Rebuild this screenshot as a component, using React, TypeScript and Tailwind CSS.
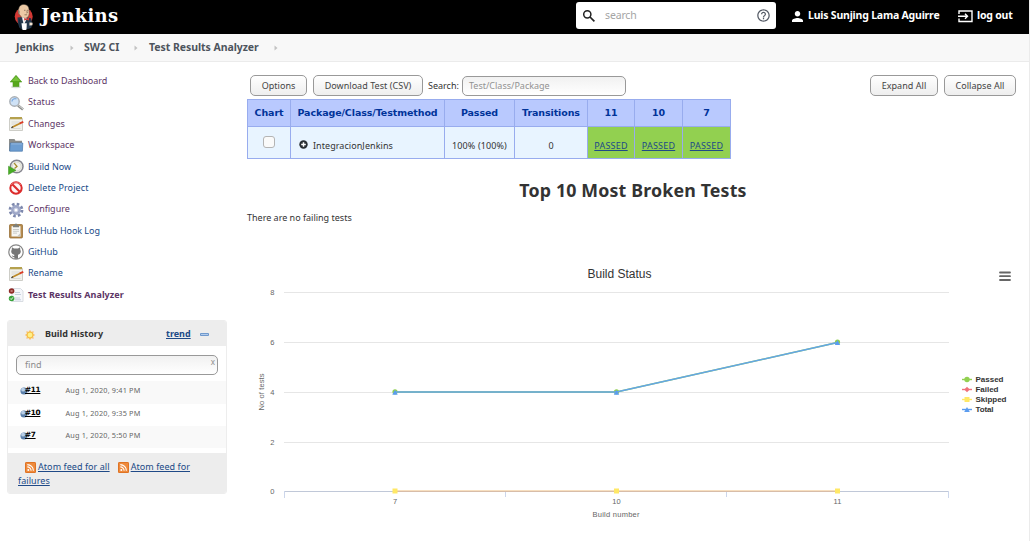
import type { ReactNode } from "react";

const sans = "font-['Noto_Sans','Open_Sans',sans-serif]";

function JenkinsLogo() {
  return (
    <svg className="mt-[3px] h-[27px] w-[20px] shrink-0" viewBox="0 0 20 27">
      <circle cx="9.7" cy="12.5" r="9" fill="#d33833" />
      <path d="M3.5 13.5 8 13l5 .5 4 .8 1.3 5.4-1 4-3 1.3-6 .7-3-2.2-1.5-5z" fill="#24384c" />
      <path d="M4.7 5C5 1.8 7.300.3 10 .4c3.400.2 5 2.200 5 5.300l.2 3.800c-.2 2.800-1.600 4.300-3.700 4.800L8 13.700 5.400 10.500C4.300 8.800 4.400 7 4.700 5z" fill="#ecc9a5" stroke="#4c443b" strokeWidth=".5" />
      <path d="M4.700 5c-.9 1.700-.7 3.800.3 5.400l.8-2.600z" fill="#8b8272" />
      <path d="M10 6.300h1.500M13 6.300h1.400M10.500 10.800h2.600M12.700 6.600l.7 2.200-1 .2" stroke="#5b4636" strokeWidth=".6" fill="none" />
      <path d="M8 13.300l1.800 7.700 3.100-6.500z" fill="#f5f5f5" />
      <path d="M10.200 13.900l2.400.8 2.400-.9v2.800l-2.400-.8-2.400.8z" fill="#d33833" />
      <path d="M7.500 19.200h5.300l-.3 6.300c-1 .8-3.200.8-4.200 0z" fill="#fff" />
      <path d="M15.500 18.500l3.100.3-.2 2.500-3 .3z" fill="#f3e1cf" />
      <path d="M5.400 15.500l1.200 8.800" stroke="#111d29" strokeWidth=".6" />
    </svg>
  );
}

function Crumb({ children, width }: { children: ReactNode; width: string }) {
  return (
    <div className={`flex shrink-0 items-center justify-between ${width}`}>
      <span>{children}</span>
      <svg className="h-[6px] w-[4px]" viewBox="0 0 4 6"><path d="M.5.5 3.500 3 .5 5.500z" fill="#c3c3c3" /></svg>
    </div>
  );
}

function UpIcon() {
  return (
    <svg viewBox="0 0 16 16">
      <ellipse cx="8" cy="14" rx="5" ry="1.200" fill="#d8dfd5" />
      <path d="M8 2.300 13.800 9H11v4.500H5V9H2.200z" fill="#57a81c" stroke="#4f9820" strokeWidth=".6" />
      <path d="M8 3.500 12 8H4z" fill="#77c33a" />
    </svg>
  );
}
function SearchIcon() {
  return (
    <svg viewBox="0 0 16 16">
      <path d="M10 10.500 15 14.500" stroke="#8d8f8c" strokeWidth="2.600" />
      <path d="M10.500 10.400 15 14" stroke="#e5e5e5" strokeWidth=".9" />
      <circle cx="6.500" cy="6.500" r="4.700" fill="#cfe2f6" stroke="#a9afb5" strokeWidth="1.400" />
      <path d="M4 6.500A3 3 0 0 1 8.500 4" stroke="#7cabe0" fill="none" strokeWidth="1.300" />
    </svg>
  );
}
function NotepadIcon() {
  return (
    <svg viewBox="0 0 16 16">
      <path d="M1.500 2.500h13v12h-13z" fill="#f1f1ec" stroke="#c1c1bb" strokeWidth=".8" />
      <path d="M2 1h12v2.300H2z" fill="#b5a14e" />
      <path d="M3.500 6h8M3.500 8h6M3.500 12.500h9" stroke="#d4d4ce" strokeWidth=".8" />
      <path d="M4.200 11.200 12.300 7.300" stroke="#bd8a27" strokeWidth="1.700" />
      <path d="M11.800 7.400 15.300 5.900" stroke="#db3c26" strokeWidth="1.700" />
      <path d="M3.300 11.800 5 10.900" stroke="#444" strokeWidth="1.200" />
    </svg>
  );
}
function FolderIcon() {
  return (
    <svg viewBox="0 0 16 16">
      <path d="M1 2h5.500l1 1.800H14V9H1z" fill="#8b8d8b" />
      <path d="M1 8h3v6H1z" fill="#8b8d8b" />
      <path d="M1.700 14.200 2.300 6H14.800L14.400 14.200z" fill="#6d9dd1" stroke="#4a79ac" strokeWidth=".7" />
      <path d="M3.200 6.900h10.700" stroke="#a4c5e8" strokeWidth=".8" />
    </svg>
  );
}
function BuildIcon() {
  return (
    <svg viewBox="0 0 16 16">
      <circle cx="8.700" cy="7.500" r="6.300" fill="#f2f2ec" stroke="#85858e" strokeWidth="1.500" />
      <circle cx="8.700" cy="7.500" r="4.500" fill="none" stroke="#d0d0c5" strokeWidth=".8" />
      <path d="M6.200 4.200 9 7.500l-2.500 2" stroke="#a48a29" strokeWidth="1.300" fill="none" />
      <path d="M.5 7.200 8 11.300.5 15.500z" fill="#48ad25" stroke="#3a901e" strokeWidth=".5" />
    </svg>
  );
}
function DeleteIcon() {
  return (
    <svg viewBox="0 0 16 16">
      <circle cx="8" cy="8" r="5.700" fill="#fff5f5" stroke="#dc2c2c" strokeWidth="2" />
      <path d="M4 4 12 12" stroke="#dc2c2c" strokeWidth="2.200" />
      <path d="M3.200 5A5.700 5.700 0 0 1 12.800 5" stroke="#ef7c7c" fill="none" strokeWidth=".8" />
    </svg>
  );
}
function GearIcon() {
  return (
    <svg viewBox="0 0 16 16">
      <circle cx="8" cy="8" r="5.800" fill="none" stroke="#7d88ad" strokeWidth="3.200" strokeDasharray="2.450 2.105" />
      <circle cx="8" cy="8" r="4.900" fill="#a3accb" />
      <circle cx="8" cy="8" r="3.100" fill="#bdc4dc" stroke="#8992b5" strokeWidth=".6" />
      <circle cx="8" cy="8" r="1.500" fill="#fff" />
    </svg>
  );
}
function ClipboardIcon() {
  return (
    <svg viewBox="0 0 16 16">
      <rect x="1.500" y="1.500" width="13" height="13.500" rx="1" fill="#b68a4c" stroke="#8f6629" strokeWidth=".7" />
      <path d="M3.500 3.200h9v10.300h-9z" fill="#f6f6f3" />
      <path d="M5 2.200h1.500L7 .7h2l.5 1.500H11v2H5z" fill="#7e807b" />
      <path d="M5 6.500h6M5 8.300h6M5 10.100h4" stroke="#bfc0bc" strokeWidth=".8" />
      <path d="M9 13.500 12.500 10v3.500z" fill="#c9c9c5" />
    </svg>
  );
}
function GitHubIcon() {
  return (
    <svg viewBox="0 0 16 16">
      <circle cx="8" cy="8" r="7.200" fill="#fff" stroke="#868686" strokeWidth="1.200" />
      <path d="M4 3.300l2 1.100h4l2-1.100.3 2.400c1.200 2.100.2 4.400-2.300 5v4H6.300v-1.600c-1.500.2-2.100-.6-2.600-1.500 1.100 0 1.300.7 2.500.6l.1-1.500C3.500 10.100 2.500 7.800 3.700 5.700z" fill="#777" />
    </svg>
  );
}
function AnalyzerIcon() {
  return (
    <svg viewBox="0 0 16 16">
      <path d="M4 1.500h8.500L15 4v10.500H4z" fill="#f5f7fb" stroke="#d1d5dc" strokeWidth=".8" />
      <path d="M7 5.500h5M7 7.500h6M7 11h5M7 12.800h6" stroke="#b9c4d5" strokeWidth=".8" />
      <circle cx="3.600" cy="4" r="2.800" fill="#8e2a27" />
      <path d="M2.800 3.200l1.600 1.600m0-1.600-1.600 1.600" stroke="#f2c9c9" strokeWidth=".7" />
      <circle cx="3.600" cy="11.500" r="2.800" fill="#37a33b" />
      <path d="M2.200 11.500l1 1 1.800-2.200" stroke="#fff" strokeWidth=".9" fill="none" />
    </svg>
  );
}

const tasks = [
  { label: "Back to Dashboard", icon: <UpIcon />, look: "text-[#5c3566] tracking-[-0.050px]" },
  { label: "Status", icon: <SearchIcon />, look: "text-[#5c3566] tracking-[0.100px]" },
  { label: "Changes", icon: <NotepadIcon />, look: "text-[#5c3566]" },
  { label: "Workspace", icon: <FolderIcon />, look: "text-[#5c3566]" },
  { label: "Build Now", icon: <BuildIcon />, look: "text-[#204a87]" },
  { label: "Delete Project", icon: <DeleteIcon />, look: "text-[#204a87] tracking-[0.100px]" },
  { label: "Configure", icon: <GearIcon />, look: "text-[#5c3566]" },
  { label: "GitHub Hook Log", icon: <ClipboardIcon />, look: "text-[#204a87] tracking-[-0.050px]" },
  { label: "GitHub", icon: <GitHubIcon />, look: "text-[#204a87]" },
  { label: "Rename", icon: <NotepadIcon />, look: "text-[#204a87]" },
  { label: "Test Results Analyzer", icon: <AnalyzerIcon />, look: "font-bold text-[#5c3566] tracking-[0.040px]" },
];

const builds = [
  { id: "#11", date: "Aug 1, 2020, 9:41 PM", row: "h-[23px] bg-[#f9f9f9]" },
  { id: "#10", date: "Aug 1, 2020, 9:35 PM", row: "h-[22px] bg-white" },
  { id: "#7", date: "Aug 1, 2020, 5:50 PM", row: "h-[22px] bg-[#f9f9f9]" },
];

function RssIcon() {
  return (
    <svg className="mr-[2px] inline h-[11px] w-[11px] align-[-3px]" viewBox="0 0 11 11">
      <rect width="11" height="11" rx="1.500" fill="#ee8a3c" />
      <rect x=".4" y=".4" width="10.200" height="10.200" rx="1.200" fill="none" stroke="#d9691c" strokeWidth=".8" />
      <circle cx="3.300" cy="7.900" r="1" fill="#fff" />
      <path d="M2.300 4.900a3.800 3.800 0 0 1 3.800 3.900M2.300 2.600a6.200 6.200 0 0 1 6.100 6.200" fill="none" stroke="#fff" strokeWidth="1.100" />
    </svg>
  );
}

function BuildHistory() {
  return (
    <section className="ml-[7px] mt-[15px] w-[220px] overflow-hidden rounded-[3px] border border-[#ededed] bg-white">
      <header className="flex h-[25px] items-center bg-[#ededed] pl-[16px] text-[9px] font-bold text-[#333]">
        <svg className="mt-[2px] h-[12px] w-[12px]" viewBox="0 0 12 12">
          <path d="M6 .8 7.200 2.800 9.700 2.300 9.200 4.800 11.200 6 9.200 7.200 9.700 9.700 7.200 9.200 6 11.200 4.800 9.200 2.300 9.700 2.800 7.200.8 6 2.800 4.800 2.300 2.300 4.800 2.800z" fill="#fbc06c" />
          <circle cx="6" cy="6" r="2.900" fill="#fff08a" stroke="#f0b634" strokeWidth=".8" />
        </svg>
        <span className="ml-[9px] w-[121px]">Build History</span>
        <a className="w-[34px] text-[#204a87] underline">trend</a>
        <svg className="mt-[2px] h-[3px] w-[9px]" viewBox="0 0 9 3"><rect x=".4" y=".4" width="8.200" height="2.200" rx=".6" fill="#b3ccec" stroke="#4a7fc0" strokeWidth=".8" /></svg>
      </header>
      <div className="flex h-[35px] items-start px-[8px] pt-[9px]">
        <div className="flex h-[20px] w-[202px] justify-between rounded-[5px] border border-[#999] bg-linear-to-b from-[#f1f1f1] to-white pl-[8px] pr-[2px] text-[9px] leading-[18px] text-[#8c8c8c]">
          <span>find</span>
          <span className="text-[8px] leading-[11px]">x</span>
        </div>
      </div>
      {builds.map((b) => (
        <div key={b.id} className={`flex items-center pb-[4px] pl-[12px] ${b.row}`}>
          <svg className="mt-px h-[8px] w-[8px]" viewBox="0 0 9 9">
            <circle cx="4.500" cy="4.500" r="4" fill="#5a7faa" />
            <circle cx="3.500" cy="3" r="2.200" fill="#b8cee7" />
          </svg>
          <a className="-ml-[3px] w-[40.500px] font-['DejaVu_Sans',sans-serif] text-[7.300px] font-bold tracking-[-0.300px] text-black underline decoration-1 underline-offset-1">{b.id}</a>
          <span className="text-[7.300px] tracking-[0.170px] text-[#666]">{b.date}</span>
        </div>
      ))}
      <footer className="mt-[5px] h-[40px] bg-[#ededed] pl-[10px] pt-[7px] text-[9px] leading-[14px] tracking-[0.060px] text-[#204a87]">
        <div className="pl-[7px]">
          <RssIcon /><a className="underline">Atom feed for all</a>
          <span className="inline-block w-[8px]" />
          <RssIcon /><a className="underline">Atom feed for</a>
        </div>
        <a className="block underline">failures</a>
      </footer>
    </section>
  );
}

function Button({ children, width }: { children: ReactNode; width: string }) {
  return (
    <button className={`h-[21px] shrink-0 whitespace-nowrap rounded-[5px] border border-[#999] bg-linear-to-b from-white to-[#eee] text-[9px] leading-[19px] tracking-[0.040px] text-[#444] ${width}`}>
      {children}
    </button>
  );
}

function ResultsTable() {
  return (
    <div className="grid w-[484px] grid-cols-[42px_153px_69px_72px_46px_47px_47px] grid-rows-[26px_31px] gap-px bg-[#98acee] p-px text-[9px] text-[#333]">
      {["Chart", "Package/Class/Testmethod", "Passed", "Transitions", "11", "10", "7"].map((h) => (
        <div key={h} className="flex items-center justify-center bg-[#b9c9fe] font-['DejaVu_Sans',sans-serif] text-[9.500px] font-bold tracking-[-0.100px] text-[#039]">{h}</div>
      ))}
      <div className="flex justify-center bg-[#e8f4ff] pt-[9px]">
        <span className="h-[12px] w-[12px] rounded-[3px] border border-[#b4b4b4] bg-[#fafafa]" />
      </div>
      <div className="flex items-center bg-[#e8f4ff] pl-[8px] pt-[6px]">
        <svg className="-mt-[3px] h-[9px] w-[9px]" viewBox="0 0 9 9"><circle cx="4.500" cy="4.500" r="4.200" fill="#272d32" /><path d="M4.500 2.200v4.600M2.200 4.500h4.600" stroke="#fff" strokeWidth="1.500" /></svg>
        <span className="ml-[5px] tracking-[0.060px]">IntegracionJenkins</span>
      </div>
      <div className="flex items-center justify-center whitespace-nowrap bg-[#e8f4ff] pt-[6px] tracking-[0.120px]">100% (100%)</div>
      <div className="flex items-center justify-center bg-[#e8f4ff] pt-[6px]">0</div>
      {[11, 10, 7].map((n) => (
        <div key={n} className="flex items-center justify-center bg-[#92d050] pt-[6px]"><a className="tracking-[0.200px] text-[#204a87] underline">PASSED</a></div>
      ))}
    </div>
  );
}

const seriesX = [148, 369.500, 590.500];

function Chart() {
  return (
    <svg className="mt-[31px] block h-[286px] w-[782px] font-['Liberation_Sans',sans-serif]" viewBox="0 0 782 286">
      <text x="372.500" y="23" textAnchor="middle" fontSize="12.300" fill="#333" textLength="64" lengthAdjust="spacingAndGlyphs">Build Status</text>
      {[37.500, 87.500, 137.500, 187.500].map((y) => <path key={y} d={`M37 ${y}H702`} stroke="#e6e6e6" />)}
      <path d="M37 236.500H702" stroke="#c0c8d8" />
      <path d="M37.500 236v7M258.500 236v6M479.500 236v6M701.500 236v7" stroke="#ccd6eb" fill="none" />
      <g fontSize="7.500" fill="#666">
        {["8", "6", "4", "2", "0"].map((n, i) => <text key={n} x="27.500" y={[40, 90, 140, 190, 239][i]} textAnchor="end">{n}</text>)}
        {["7", "10", "11"].map((n, i) => <text key={n} x={seriesX[i]} y="249" textAnchor="middle">{n}</text>)}
        <text x="369" y="262" textAnchor="middle" textLength="47">Build number</text>
        <text transform="translate(17 137) rotate(-90)" textAnchor="middle" textLength="37">No of tests</text>
      </g>
      <path d="M148 235.500H590.500" stroke="#f7dfc0" />
      <path d="M148 236.500H590.500" stroke="#d8bda8" />
      {seriesX.map((x) => <rect key={x} x={x - 2.500} y="233.500" width="5" height="5" fill="#ffe866" />)}
      <path d="M148 137 369.500 137 590.500 87.500" fill="none" stroke="#92d050" strokeWidth="1.500" />
      {seriesX.map((x, i) => <circle key={x} cx={x} cy={i === 2 ? 87 : 136.800} r="2.600" fill="#92d050" />)}
      <path d="M148 137 369.500 137 590.500 87.500" fill="none" stroke="#64a5e8" strokeWidth="1.500" />
      {seriesX.map((x, i) => {
        const y = i === 2 ? 87.500 : 137.300;
        return <path key={x} d={`M${x} ${y - 2.500}L${x + 2.700} ${y + 2.500}H${x - 2.700}z`} fill="#5b9cf0" />;
      })}
      <path d="M753 17.500h10M753 21.200h10M753 25h10" stroke="#666" strokeWidth="1.800" strokeLinecap="round" />
      <path d="M715 124.500h10" stroke="#92d050" strokeWidth="1.400" />
      <circle cx="720" cy="124.500" r="2.700" fill="#92d050" />
      <path d="M715 134.500h10" stroke="#f0717a" strokeWidth="1.400" />
      <path d="M720 131.700l2.700 2.800-2.700 2.700-2.700-2.700z" fill="#f0717a" />
      <path d="M715 144.500h10" stroke="#ffe866" strokeWidth="1.400" />
      <path d="M717.500 142h5v5h-5z" fill="#ffe866" />
      <path d="M715 154.500h10" stroke="#5b9cf0" strokeWidth="1.400" />
      <path d="M720 151.900l2.800 5.100h-5.600z" fill="#5b9cf0" />
      <g fontSize="8" fontWeight="700" fill="#333">
        <text x="728.500" y="127" textLength="28">Passed</text>
        <text x="728.500" y="137" textLength="23">Failed</text>
        <text x="728.500" y="147" textLength="31">Skipped</text>
        <text x="728.500" y="157" textLength="18">Total</text>
      </g>
    </svg>
  );
}

export default function App() {
  return (
    <div className={`h-[541px] w-[1030px] overflow-hidden border-r border-[#ebebeb] bg-white text-[9px] text-[#333] ${sans}`}>
      <header className="flex h-[34px] items-center bg-black text-[11px] font-bold text-white">
        <div className="-mt-[3px] flex w-[576px] items-center pl-[14px]">
          <JenkinsLogo />
          <span className="ml-[7px] font-['DejaVu_Serif',serif] text-[18px] leading-[26px] tracking-[0.250px]">Jenkins</span>
        </div>
        <div className="-mt-[3px] flex h-[27px] w-[200px] items-center rounded-[3px] bg-white pl-[6px] pr-[5px] font-normal">
          <svg className="h-[14px] w-[14px]" viewBox="0 0 14 14"><circle cx="5.300" cy="5.300" r="3.600" fill="none" stroke="#222" strokeWidth="1.500" /><path d="M8 8l4.400 4.400" stroke="#222" strokeWidth="1.700" /></svg>
          <span className="ml-[9px] flex-1 text-[10.500px] tracking-[-0.150px] text-[#a5a5a5]">search</span>
          <svg className="h-[15px] w-[15px]" viewBox="0 0 24 24" fill="#555b66"><path d="M11 18h2v-2h-2v2zm1-16C6.480 2 2 6.480 2 12s4.480 10 10 10 10-4.480 10-10S17.520 2 12 2zm0 18c-4.410 0-8-3.590-8-8s3.590-8 8-8 8 3.590 8 8-3.590 8-8 8zm0-14c-2.210 0-4 1.790-4 4h2c0-1.100.9-2 2-2s2 .9 2 2c0 2-3 1.750-3 5h2c0-2.250 3-2.500 3-5 0-2.210-1.790-4-4-4z" /></svg>
        </div>
        <div className="-mt-[3px] flex w-[182px] items-center pl-[16px]">
          <svg className="mt-[1px] h-[11px] w-[11px]" viewBox="4 4 16 16" fill="#fff"><path d="M12 12c2.210 0 4-1.790 4-4s-1.790-4-4-4-4 1.790-4 4 1.790 4 4 4zm0 2c-2.670 0-8 1.340-8 4v2h16v-2c0-2.660-5.330-4-8-4z" /></svg>
          <span className="ml-[5px] whitespace-nowrap text-[10.500px] tracking-[-0.200px]">Luis Sunjing Lama Aguirre</span>
        </div>
        <div className="-mt-[3px] flex items-center">
          <svg className="mt-[2px] h-[13px] w-[15px]" viewBox="0 0 15 13" fill="none" stroke="#fff" strokeWidth="1.400"><path d="M1 4V1h13v10.500H1V8.500M0 6.300h9M7 3.800l2.500 2.500L7 8.800" /></svg>
          <span className="ml-[4px] whitespace-nowrap text-[10.500px] tracking-[-0.200px]">log out</span>
        </div>
      </header>
      <nav className="flex h-[28px] items-center border-b border-[#ebebeb] bg-[#f8f8f8] pl-[16px] text-[10.500px] font-bold tracking-[-0.050px] text-[#4d545d]">
        <Crumb width="w-[58px] mr-[10px]">Jenkins</Crumb>
        <Crumb width="w-[54px] mr-[11px]">SW2 CI</Crumb>
        <Crumb width="w-[129px]">Test Results Analyzer</Crumb>
      </nav>
      <div className="flex">
        <aside className="w-[247px] pt-[8px]">
          {tasks.map((t) => (
            <div key={t.label} className={`flex h-[21.400px] items-center pl-[8px] ${t.look}`}>
              <span className="mt-[1px] h-[16px] w-[16px]">{t.icon}</span>
              <a className="ml-[4px] whitespace-nowrap">{t.label}</a>
            </div>
          ))}
          <BuildHistory />
        </aside>
        <main className="w-[782px] pt-[13px]">
          <div className="flex h-[24px] items-start pl-[3px]">
            <Button width="w-[57px]">Options</Button>
            <Button width="w-[110px] ml-[6px]">Download Test (CSV)</Button>
            <span className="ml-[5px] w-[34px] leading-[21px]">Search:</span>
            <div className="mt-px h-[20px] w-[164px] rounded-[5px] border border-[#999] bg-linear-to-b from-[#f1f1f1] to-white pl-[6px] leading-[18px] text-[#929292]">Test/Class/Package</div>
            <div className="ml-auto mr-[13px] flex gap-[6px]">
              <Button width="w-[68px]">Expand All</Button>
              <Button width="w-[72px]">Collapse All</Button>
            </div>
          </div>
          <ResultsTable />
          <h1 className="mt-[18px] pr-[10px] text-center text-[17.800px] font-bold leading-[26px] tracking-[0.150px]">Top 10 Most Broken Tests</h1>
          <p className="mt-[8px] leading-[13px]">There are no failing tests</p>
          <Chart />
        </main>
      </div>
    </div>
  );
}
